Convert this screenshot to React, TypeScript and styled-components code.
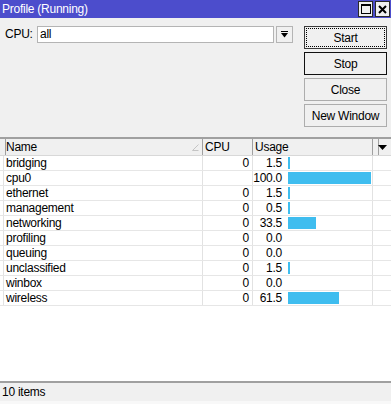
import React from "react";
import styled, { createGlobalStyle } from "styled-components";

const GlobalStyle = createGlobalStyle`
	html, body {
		margin: 0;
		padding: 0;
		background: #f0f0f0;
	}
	body {
		font-family: "Liberation Sans", Arial, sans-serif;
		font-size: 11px;
		letter-spacing: -0.25px;
		color: #000;
	}
`;

const Window = styled.div`
	width: 391px;
	height: 404px;
	display: flex;
	flex-direction: column;
	background: #f0f0f0;
	overflow: hidden;
`;

const TitleBar = styled.div`
	height: 18px;
	flex: none;
	background: #4c4dcc;
	display: flex;
	align-items: center;
	justify-content: space-between;
	padding: 0 1px 0 2px;
	color: #fff;
	font-size: 12px;
`;

const TitleButtons = styled.div`
	display: flex;
	gap: 2px;
	align-self: flex-start;
	padding-top: 1px;
`;

const TitleButton = styled.div`
	width: 13px;
	height: 14px;
	background: #f0f0f0;
	border: 1px solid #2a2a2a;
	display: flex;
	align-items: center;
	justify-content: center;
`;

const TopPanel = styled.div`
	height: 120px;
	flex: none;
	display: flex;
	padding: 8px 4px 0 5px;
	box-sizing: border-box;
	border-bottom: 1px solid #a0a0a0;
`;

const FieldRow = styled.div`
	flex: 1;
	display: flex;
	align-items: flex-start;
	height: 17px;
`;

const Label = styled.span`
	width: 32px;
	line-height: 17px;
	font-size: 12px;
`;

const SelectBox = styled.div`
	width: 237px;
	height: 17px;
	box-sizing: border-box;
	background: #fff;
	border: 1px solid #b4b4b4;
	padding-left: 2px;
	line-height: 15px;
	font-size: 12px;
`;

const SelectButton = styled.div`
	width: 17px;
	height: 17px;
	margin-left: 2px;
	box-sizing: border-box;
	border: 1px solid #b4b4b4;
	background: #f0f0f0;
	display: flex;
	align-items: center;
	justify-content: center;
`;

const ButtonColumn = styled.div`
	width: 83px;
	display: flex;
	flex-direction: column;
	gap: 3px;
	margin-left: 11px;
`;

const Button = styled.div<{ $variant?: "focus" | "default" }>`
	height: 23px;
	box-sizing: border-box;
	border: 1px solid
		${(p) => (p.$variant === "focus" ? "#3a3a3a" : p.$variant === "default" ? "#111" : "#adadad")};
	background: #f0f0f0;
	display: flex;
	align-items: center;
	justify-content: center;
	padding: 1px;
	font-size: 12px;
	& > span {
		flex: 1;
		align-self: stretch;
		display: flex;
		align-items: center;
		justify-content: center;
		border: 1px dotted ${(p) => (p.$variant === "focus" ? "#000" : "transparent")};
	}
`;

const Table = styled.div`
	flex: 1;
	display: flex;
	flex-direction: column;
	background: #fff;
	border-top: 1px solid #a0a0a0;
`;

const cols = "4px 199px 50px 120px 3px 15px";

const HeaderRow = styled.div`
	display: grid;
	grid-template-columns: ${cols};
	height: 16px;
	background: #f0f0f0;
	border-bottom: 1px solid #d8d8d8;
`;

const HeaderCell = styled.div<{ $last?: boolean }>`
	border-right: ${(p) => (p.$last ? "none" : "1px solid #a0a0a0")};
	display: flex;
	align-items: center;
	justify-content: space-between;
	padding-left: 2px;
	padding-right: 3px;
	font-size: 12px;
	line-height: 16px;
`;

const Row = styled.div`
	display: grid;
	grid-template-columns: 4px 199px 50px 120px 18px;
	height: 14px;
	border-bottom: 1px solid #e6e6e6;
	line-height: 14px;
	font-size: 12px;
`;

const Cell = styled.div<{ $align?: "left" | "right"; $plain?: boolean }>`
	border-right: ${(p) => (p.$plain ? "none" : "1px solid #e2e2e2")};
	text-align: ${(p) => p.$align ?? "left"};
	padding: ${(p) => (p.$align === "right" ? "0 3px 0 0" : "0 0 0 2px")};
	white-space: nowrap;
	overflow: hidden;
`;

const UsageCell = styled.div`
	border-right: 1px solid #e2e2e2;
	display: flex;
	align-items: center;
	gap: 6px;
`;

const UsageValue = styled.span`
	width: 29px;
	text-align: right;
	flex: none;
`;

const Bar = styled.div`
	height: 12px;
	background: #3fbdef;
`;

const StatusBar = styled.div`
	height: 23px;
	flex: none;
	box-sizing: border-box;
	border-top: 2px solid #a0a0a0;
	border-bottom: 3px solid #f8f8f8;
	padding-left: 2px;
	display: flex;
	align-items: center;
	font-size: 12px;
`;

const rows = [
	{ name: "bridging", cpu: "0", usage: 1.5 },
	{ name: "cpu0", cpu: "", usage: 100.0 },
	{ name: "ethernet", cpu: "0", usage: 1.5 },
	{ name: "management", cpu: "0", usage: 0.5 },
	{ name: "networking", cpu: "0", usage: 33.5 },
	{ name: "profiling", cpu: "0", usage: 0.0 },
	{ name: "queuing", cpu: "0", usage: 0.0 },
	{ name: "unclassified", cpu: "0", usage: 1.5 },
	{ name: "winbox", cpu: "0", usage: 0.0 },
	{ name: "wireless", cpu: "0", usage: 61.5 },
];

const BAR_MAX = 83;

const App = () => {
	return (
		<Window>
			<GlobalStyle />
			<TitleBar>
				<span>Profile (Running)</span>
				<TitleButtons>
					<TitleButton>
						<svg width="10" height="10" viewBox="0 0 10 10">
							<rect x="0.5" y="0.5" width="9" height="9" fill="none" stroke="#000" />
							<rect x="0" y="0" width="10" height="2" fill="#000" />
						</svg>
					</TitleButton>
					<TitleButton>
						<svg width="9" height="9" viewBox="0 0 9 9">
							<path d="M1 1 L8 8 M8 1 L1 8" stroke="#000" strokeWidth="2" />
						</svg>
					</TitleButton>
				</TitleButtons>
			</TitleBar>

			<TopPanel>
				<FieldRow>
					<Label>CPU:</Label>
					<SelectBox>all</SelectBox>
					<SelectButton>
						<svg width="7" height="7" viewBox="0 0 7 7">
							<rect x="0" y="0" width="7" height="1" fill="#000" />
							<path d="M0 2 L7 2 L3.5 6.5 Z" fill="#000" />
						</svg>
					</SelectButton>
				</FieldRow>
				<ButtonColumn>
					<Button $variant="focus">
						<span>Start</span>
					</Button>
					<Button $variant="default">
						<span>Stop</span>
					</Button>
					<Button>
						<span>Close</span>
					</Button>
					<Button>
						<span>New Window</span>
					</Button>
				</ButtonColumn>
			</TopPanel>

			<Table>
				<HeaderRow>
					<HeaderCell />
					<HeaderCell>
						<span>Name</span>
						<svg width="7" height="7" viewBox="0 0 7 7">
							<path d="M0.5 6.5 L6.5 0.5 M0.5 6.5 L6.5 6.5" stroke="#c4c4c4" fill="none" />
						</svg>
					</HeaderCell>
					<HeaderCell>CPU</HeaderCell>
					<HeaderCell>Usage</HeaderCell>
					<HeaderCell />
					<HeaderCell $last>
						<svg width="9" height="5" viewBox="0 0 9 5">
							<path d="M0 0 L9 0 L4.5 5 Z" fill="#000" />
						</svg>
					</HeaderCell>
				</HeaderRow>
				{rows.map((r) => (
					<Row key={r.name}>
						<Cell />
						<Cell>{r.name}</Cell>
						<Cell $align="right">{r.cpu}</Cell>
						<UsageCell>
							<UsageValue>{r.usage.toFixed(1)}</UsageValue>
							{r.usage > 0 && (
								<Bar style={{ width: Math.max(2, Math.round((r.usage / 100) * BAR_MAX)) }} />
							)}
						</UsageCell>
						<Cell $plain />
					</Row>
				))}
			</Table>

			<StatusBar>10 items</StatusBar>
		</Window>
	);
};

export default App;
